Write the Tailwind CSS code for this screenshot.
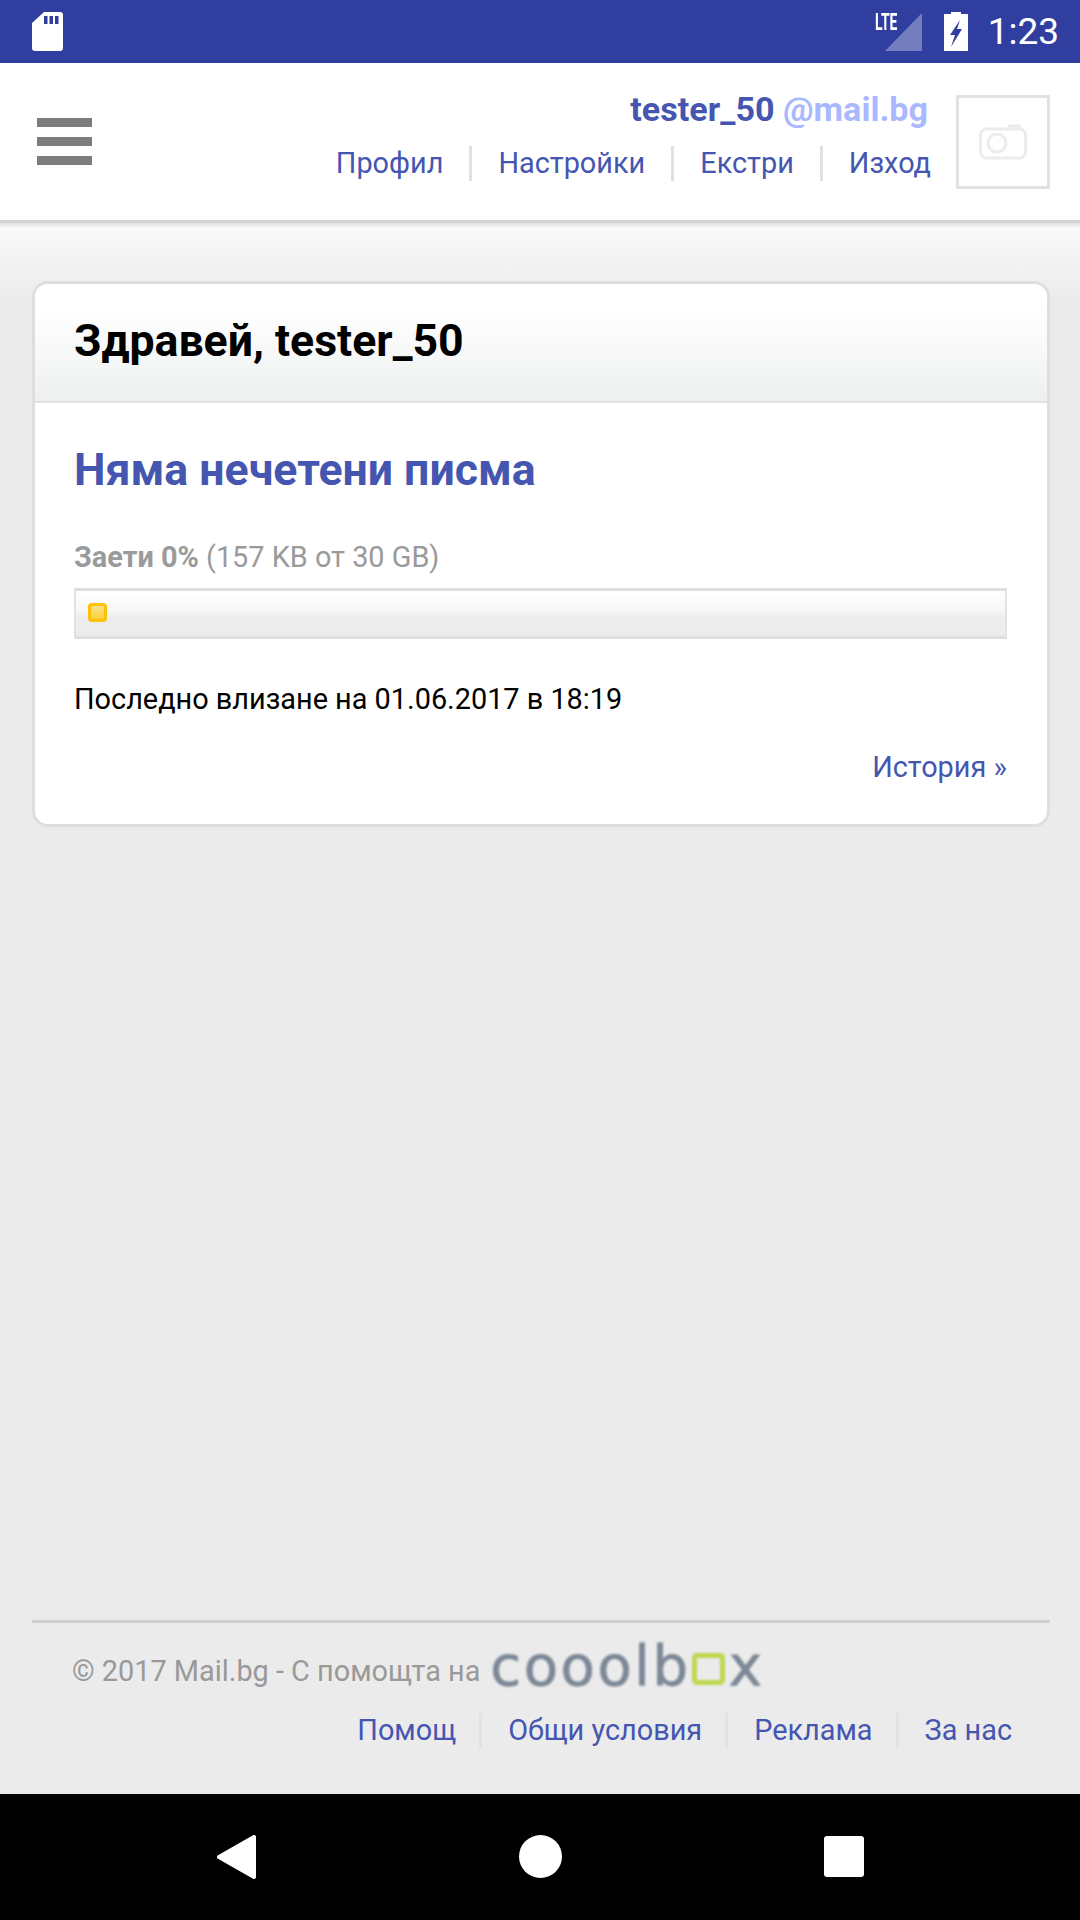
<!DOCTYPE html>
<html lang="bg">
<head>
<meta charset="utf-8">
<script src="https://cdn.jsdelivr.net/npm/@tailwindcss/browser@4"></script>
<title>Mail.bg</title>
</head>
<body class="m-0 bg-[#ebebeb]">
<div class="w-[1080px] h-[1920px] flex flex-col overflow-hidden font-['Roboto',sans-serif] bg-[#ebebeb]">

  <!-- status bar -->
  <div class="h-[63px] shrink-0 bg-[#303f9f] flex items-center pl-[32px] pr-[21px] text-white">
    <svg class="w-[31px] h-[39px] mt-[-1px]" viewBox="0 0 31 39"><path fill="#fff" d="M12 0H28a3 3 0 0 1 3 3V36a3 3 0 0 1-3 3H3a3 3 0 0 1-3-3V11Z"/><path fill="#303f9f" d="M12 4h3.500v8H12zM17.500 4H21v8h-3.500zM23 4h3.500v8H23z"/></svg>
    <div class="flex-1"></div>
    <div class="relative w-[37px] h-[38px] mr-[22px]">
      <svg class="absolute left-0 top-0 w-[37px] h-[38px]" viewBox="0 0 37 38"><path fill="#fff" fill-opacity=".33" d="M37 0V38H0Z"/></svg>
      <span class="absolute left-[-10px] top-[-3px] text-[24px] leading-[24px] font-bold text-white origin-left scale-x-[.58]">LTE</span>
    </div>
    <svg class="w-[24px] h-[39px] mr-[20px]" viewBox="0 0 24 39"><path fill="#fff" d="M7 0h10v2h7v37H0V2h7Z"/><path fill="#303f9f" d="M16 8 6 23h5L7 35l11-18h-5l3-9Z"/></svg>
    <span class="text-[37px] leading-none text-white">1:23</span>
  </div>

  <!-- header -->
  <div class="h-[160px] shrink-0 bg-white border-b-[3px] border-[#d4d4d4] flex justify-between pl-[37px] pr-[30px]">
    <div class="w-[55px] flex flex-col gap-[10px] pt-[55px]">
      <div class="h-[9px] bg-[#7d7d7b]"></div>
      <div class="h-[9px] bg-[#7d7d7b]"></div>
      <div class="h-[9px] bg-[#7d7d7b]"></div>
    </div>
    <div class="flex">
      <div class="flex flex-col items-end pt-[26px] mr-[25px]">
        <div class="text-[34.125px] leading-[40px] font-bold text-[#4556b1] mr-[3px]">tester_50 <span class="text-[#a9b8ff]">@mail.bg</span></div>
        <div class="flex items-center mt-[17px] text-[28.875px] leading-[35px] text-[#4556b1]">
          <a>Профил</a>
          <span class="w-[3px] h-[35px] bg-[#e0e0e0] mx-[26px]"></span>
          <a>Настройки</a>
          <span class="w-[3px] h-[35px] bg-[#e0e0e0] mx-[26px]"></span>
          <a>Екстри</a>
          <span class="w-[3px] h-[35px] bg-[#e0e0e0] mx-[26px]"></span>
          <a>Изход</a>
        </div>
      </div>
      <div class="w-[94px] h-[94px] mt-[32px] border-[3px] border-[#e2e2e2] flex items-center justify-center">
        <svg class="w-[48px] h-[36px] mb-[1px]" viewBox="0 0 48 36" fill="none" stroke="#ececec" stroke-width="3"><rect x="1.500" y="5" width="45" height="29" rx="6"/><circle cx="18" cy="19" r="9"/><path d="M30 4V2h10v2"/></svg>
      </div>
    </div>
  </div>

  <!-- content -->
  <div class="flex-1 flex flex-col pl-[32px] pr-[30px] bg-[linear-gradient(#e0e0e0,#fafafa_5px,#ebebeb_75px)] pt-[58px]">
    <div class="h-[546px] shrink-0 bg-white border-[3px] border-[#dedede] rounded-[16px] overflow-hidden">
      <div class="h-[119px] border-b-[2px] border-[#e2e2e0] bg-[linear-gradient(#ffffff,#ffffff_25px,#eef0f0)] pl-[39px] pt-[31px]">
        <h1 class="text-[44.625px] leading-[53px] font-bold text-black">Здравей, tester_50</h1>
      </div>
      <div class="pl-[39px] pr-[40px] pt-[41px]">
        <h2 class="text-[44.625px] leading-[53px] font-bold text-[#4556b1]">Няма нечетени писма</h2>
        <p class="mt-[43px] text-[28.875px] leading-[34px] text-[#9a9a9a]"><b class="font-bold">Заети 0%</b> (157 KB от 30 GB)</p>
        <div class="mt-[14px] h-[51px] border-x-[2px] border-x-[#e2e2e2] border-y-[3px] border-y-[#dedede] bg-[linear-gradient(#ffffff,#f6f6f6_45%,#ececec_60%,#ececec)] flex items-center pl-[12px]">
          <div class="w-[19px] h-[19px] mt-[-2px] rounded-[4px] border-[3px] border-[#ffc107] bg-[linear-gradient(#f7e08e,#fdd13a)]"></div>
        </div>
        <p class="mt-[43px] text-[28.875px] leading-[34px] text-black">Последно влизане на 01.06.2017 в 18:19</p>
        <p class="mt-[34px] text-[28.875px] leading-[34px] text-[#4556b1] text-right">История »</p>
      </div>
    </div>
    <div class="flex-1"></div>
    <div class="h-[174px] shrink-0 border-t-[3px] border-[#cfcfcf]">
      <div class="flex items-center pl-[40px] pt-[22px] h-[74px]">
        <span class="text-[28.875px] leading-[34px] text-[#999]">© 2017 Mail.bg - С помощта на</span>
        <span class="ml-[10px] flex items-baseline text-[56px] leading-[56px] text-[#7c8896] blur-[0.8px] [-webkit-text-stroke:0.8px_#7c8896] font-['DejaVu_Sans',sans-serif] mt-[-10px] tracking-[2.6px]">coool<span>b</span><span class="inline-block w-[33px] h-[32px] ml-[1px] mr-[4px] rounded-[5px] border-[5px] border-[#bdd84f]"></span>x</span>
      </div>
      <div class="flex items-center justify-end pr-[38px] mt-[16px] text-[28.875px] leading-[35px] text-[#4556b1]">
        <a>Помощ</a>
        <span class="w-[3px] h-[35px] bg-[#e2e2e2] ml-[23px] mr-[26px]"></span>
        <a>Общи условия</a>
        <span class="w-[3px] h-[35px] bg-[#e2e2e2] ml-[23px] mr-[26px]"></span>
        <a>Реклама</a>
        <span class="w-[3px] h-[35px] bg-[#e2e2e2] ml-[23px] mr-[26px]"></span>
        <a>За нас</a>
      </div>
    </div>
  </div>

  <!-- nav bar -->
  <div class="h-[126px] shrink-0 bg-black relative flex items-center justify-around">
    <svg class="absolute left-[217px] top-[41px] w-[39px] h-[44px]" viewBox="0 0 39 44"><path fill="#fff" stroke="#fff" stroke-width="4" stroke-linejoin="round" d="M2 22 37 2V42Z"/></svg>
    <div class="absolute left-[519px] top-[41px] w-[43px] h-[43px] rounded-full bg-white"></div>
    <div class="absolute left-[824px] top-[42px] w-[40px] h-[41px] rounded-[3px] bg-white"></div>
  </div>
</div>
</body>
</html>
